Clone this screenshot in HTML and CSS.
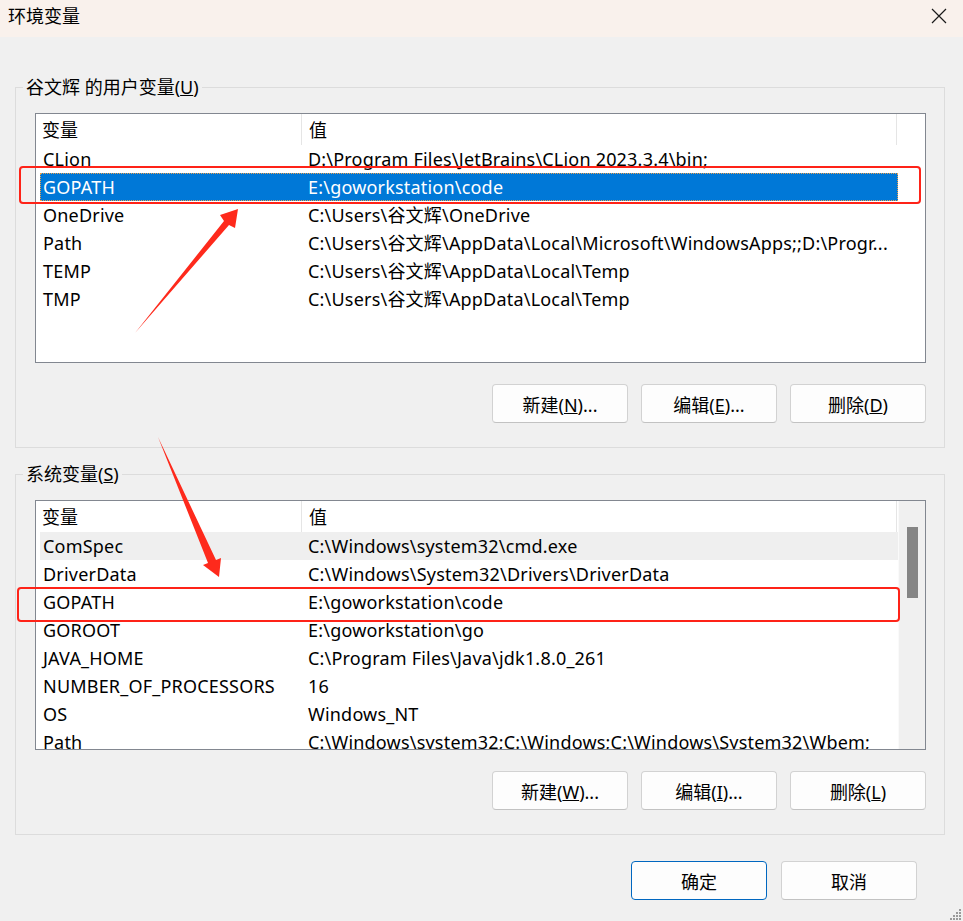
FILE: index.html
```html
<!DOCTYPE html>
<html lang="zh-CN">
<head>
  <meta charset="UTF-8">
  <title>环境变量</title>
  <link rel="stylesheet" href="styles.css">
</head>
<body>

  <div class="window">
    <div class="titlebar">
      <span class="title">环境变量</span>
      <svg class="close" width="16" height="16" viewBox="0 0 16 16">
        <path d="M1 1 L15 15 M15 1 L1 15" stroke="#1a1a1a" stroke-width="1.2" fill="none"/>
      </svg>
    </div>

    <section class="group">
      <div class="group-title">谷文辉 的用户变量(<u>U</u>)</div>
      <div class="list">
        <div class="list-main">
          <div class="list-head"><div>变量</div><div>值</div></div>
          <div class="row"><span>CLion</span><span>D:\Program Files\JetBrains\CLion 2023.3.4\bin;</span></div>
          <div class="row selected"><span>GOPATH</span><span>E:\goworkstation\code</span></div>
          <div class="row"><span>OneDrive</span><span>C:\Users\谷文辉\OneDrive</span></div>
          <div class="row"><span>Path</span><span>C:\Users\谷文辉\AppData\Local\Microsoft\WindowsApps;;D:\Progr...</span></div>
          <div class="row"><span>TEMP</span><span>C:\Users\谷文辉\AppData\Local\Temp</span></div>
          <div class="row"><span>TMP</span><span>C:\Users\谷文辉\AppData\Local\Temp</span></div>
        </div>
        <div class="list-gutter"></div>
      </div>
      <div class="actions">
        <button>新建(<u>N</u>)...</button>
        <button>编辑(<u>E</u>)...</button>
        <button>删除(<u>D</u>)</button>
      </div>
    </section>

    <section class="group group-system">
      <div class="group-title">系统变量(<u>S</u>)</div>
      <div class="list">
        <div class="list-main">
          <div class="list-head"><div>变量</div><div>值</div></div>
          <div class="row hover"><span>ComSpec</span><span>C:\Windows\system32\cmd.exe</span></div>
          <div class="row"><span>DriverData</span><span>C:\Windows\System32\Drivers\DriverData</span></div>
          <div class="row"><span>GOPATH</span><span>E:\goworkstation\code</span></div>
          <div class="row"><span>GOROOT</span><span>E:\goworkstation\go</span></div>
          <div class="row"><span>JAVA_HOME</span><span>C:\Program Files\Java\jdk1.8.0_261</span></div>
          <div class="row"><span>NUMBER_OF_PROCESSORS</span><span>16</span></div>
          <div class="row"><span>OS</span><span>Windows_NT</span></div>
          <div class="row"><span>Path</span><span>C:\Windows\system32;C:\Windows;C:\Windows\System32\Wbem;</span></div>
        </div>
        <div class="scrollbar"><div class="thumb"></div></div>
      </div>
      <div class="actions">
        <button>新建(<u>W</u>)...</button>
        <button>编辑(<u>I</u>)...</button>
        <button>删除(<u>L</u>)</button>
      </div>
    </section>

    <div class="footer">
      <button class="default">确定</button>
      <button>取消</button>
    </div>

    <!-- resize grip -->
    <svg class="grip" width="12" height="12" viewBox="0 0 12 12" fill="#9a9a9a">
      <rect x="9" y="1" width="2" height="2"/>
      <rect x="6" y="4" width="2" height="2"/><rect x="9" y="4" width="2" height="2"/>
      <rect x="3" y="7" width="2" height="2"/><rect x="6" y="7" width="2" height="2"/><rect x="9" y="7" width="2" height="2"/>
      <rect x="0" y="10" width="2" height="2"/><rect x="3" y="10" width="2" height="2"/><rect x="6" y="10" width="2" height="2"/><rect x="9" y="10" width="2" height="2"/>
    </svg>

    <!-- annotations drawn on top of the screenshot -->
    <svg class="marks" width="963" height="921" viewBox="0 0 963 921">
      <rect x="20" y="167" width="900" height="36" rx="3" fill="none" stroke="#fe2318" stroke-width="2"/>
      <rect x="18" y="588" width="881" height="33" rx="3" fill="none" stroke="#fe2318" stroke-width="2"/>
      <polygon points="135,333 224,221 220,215 238,209 235,228 229,225" fill="#fe2a1c"/>
      <polygon points="158,437 208,563 203,565 219,577 221,558 216,560" fill="#fe2a1c"/>
    </svg>
  </div>

</body>
</html>
```

FILE: styles.css
```css
body {
  margin: 0;
  font-family: "Noto Sans", "Noto Sans CJK SC", sans-serif;
  font-size: 18px;
  color: #000;
  background-color: #f0f0f0;
}

.window {
  position: relative;
  width: 963px;
  height: 921px;
  overflow: hidden;
  background-color: #f0f0f0;
}

.titlebar {
  height: 37px;
  background-color: #f9f1ec;
  display: flex;
  align-items: center;
  justify-content: space-between;
  padding: 0 16px 0 8px;
}

.title {
  font-family: "Noto Sans CJK SC", sans-serif;
  line-height: 24px;
  margin-top: -7px;
}

.close {
  margin-top: -6px;
}

.group {
  margin: 50px 18px 0 15px;
  border: 1px solid #dcdcdc;
  padding: 0 18px 24px 19px;
}

.group-system {
  margin-top: 26px;
}

.group-title {
  width: max-content;
  margin: -13px 0 0 -12px;
  padding: 0 3px;
  line-height: 24px;
  background-color: #f0f0f0;
}

.list {
  margin-top: 14px;
  height: 248px;
  border: 1px solid #828790;
  background: #fff;
  display: flex;
  overflow: hidden;
}

.list-main {
  width: 862px;
  overflow: hidden;
}

.list-gutter {
  flex: 1;
}

.list-head {
  display: grid;
  grid-template-columns: 266px 595px;
  height: 31px;
}

.list-head div {
  padding: 2px 0 0 7px;
  line-height: 29px;
  border-right: 1px solid #e5e5e5;
}

.list-head div:first-child {
  padding-left: 6px;
}

.row {
  display: grid;
  grid-template-columns: 262px 595px;
  height: 28px;
  line-height: 28px;
  margin-left: 4px;
  white-space: nowrap;
  letter-spacing: 0.2px;
}

.row span {
  overflow: hidden;
  padding-left: 3px;
}

.row span + span {
  padding-left: 6px;
}

.row.selected {
  background-color: #0078d7;
  color: #fff;
  outline: 1px dotted #e8a050;
  outline-offset: -1px;
}

.row.hover {
  background-color: #efefef;
}

.scrollbar {
  flex: 1;
  background-color: #f0f0f0;
  border-left: 1px solid #fafafa;
  padding: 26px 0 0 8px;
}

.thumb {
  width: 11px;
  height: 71px;
  background-color: #858585;
}

.actions {
  display: flex;
  justify-content: flex-end;
  gap: 13px;
  margin-top: 21px;
}

button {
  width: 136px;
  height: 39px;
  font-family: "Noto Sans", "Noto Sans CJK SC", sans-serif;
  font-size: 18px;
  color: #000;
  background-color: #fdfdfd;
  border: 1px solid #d2d2d2;
  border-bottom-color: #c2c2c2;
  border-radius: 4px;
  padding: 0;
}

.footer {
  display: flex;
  justify-content: flex-end;
  gap: 14px;
  margin: 26px 46px 0 0;
}

button.default {
  border: 1px solid #0067c0;
}

.grip {
  position: absolute;
  right: 1px;
  bottom: 1px;
}

.marks {
  position: absolute;
  left: 0;
  top: 0;
  pointer-events: none;
}
```
